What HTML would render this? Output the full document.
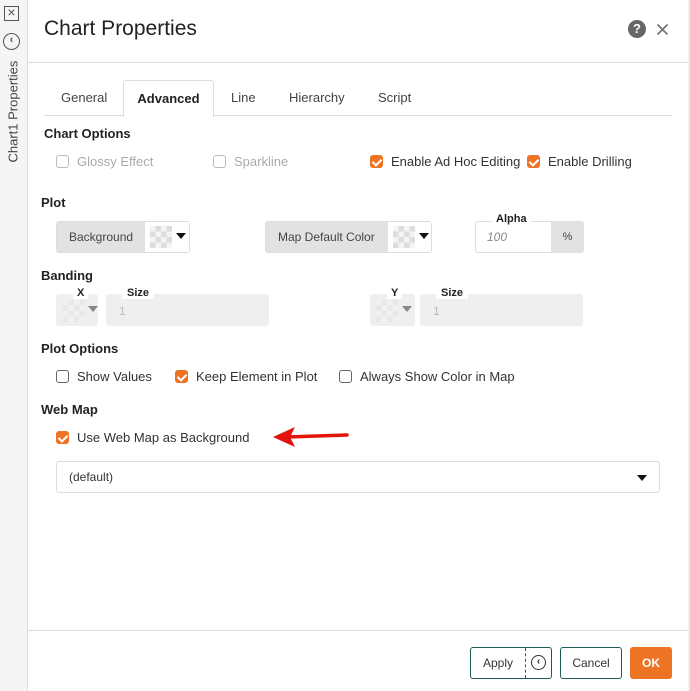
<!DOCTYPE html>
<html><head><meta charset="utf-8"><style>
*{box-sizing:border-box;margin:0;padding:0}
body{width:690px;height:691px;background:#fff;font-family:"Liberation Sans",sans-serif;position:relative;overflow:hidden;color:#222}
.a{position:absolute}
.side{left:0;top:0;width:28px;height:691px;background:#f5f5f5;border-right:1px solid #ddd}
.h{font-weight:bold;font-size:13px;color:#222}
.t{font-size:13px;color:#333}
.g{color:#aaa}
.cb{width:13px;height:13px;border:1px solid #666;border-radius:3px;background:#fff}
.cb.d{border-color:#bbb}
.cb.on{background:#ec7424;border-color:#ec7424}
.cb.on::after{content:"";position:absolute;left:3px;top:1px;width:4px;height:7px;border:solid #fff;border-width:0 2px 2px 0;transform:rotate(45deg)}
.tab{top:80px;height:36px;font-size:13px;color:#444;line-height:36px}
.sw{width:22px;height:22px;background:
 conic-gradient(#ddd 25%,#f4f4f4 0 50%,#ddd 0 75%,#f4f4f4 0) 0 0/11px 11px}
.tri{width:0;height:0;border-left:5px solid transparent;border-right:5px solid transparent;border-top:6px solid #111}
.btn{height:32px;border:1px solid #1e5c57;border-radius:3px;font-size:12px;color:#333;text-align:center;line-height:30px}
</style></head><body>
<div class="a side">
 <div class="a" style="left:4px;top:6px;width:15px;height:15px;border:1.5px solid #555;font-size:14px;line-height:11px;text-align:center;color:#555">×</div>
 <div class="a" style="left:3px;top:33px;width:17px;height:17px;border:1.5px solid #555;border-radius:50%;font-size:11px;line-height:13px;text-align:center;color:#555;font-weight:bold">‹</div>
 <div class="a" style="left:-37px;top:105px;width:100px;transform:rotate(-90deg);font-size:13px;color:#444;text-align:center;white-space:nowrap">Chart1 Properties</div>
</div>
<div class="a" style="left:688px;top:0;width:2px;height:691px;background:#eee"></div>
<div class="a" style="left:44px;top:17px;font-size:21px;color:#222">Chart Properties</div>
<div class="a" style="left:628px;top:20px;width:18px;height:18px;border-radius:50%;background:#666;color:#fff;font-size:13px;font-weight:bold;text-align:center;line-height:18px">?</div>
<svg class="a" style="left:656px;top:23px" width="13" height="13"><path d="M1.5 1.5L11.5 11.5M11.5 1.5L1.5 11.5" stroke="#777" stroke-width="1.8"/></svg>
<div class="a" style="left:28px;top:62px;width:660px;height:1px;background:#ddd"></div>
<div class="a" style="left:44px;top:115px;width:628px;height:1px;background:#ddd"></div>
<div class="a tab" style="left:61px">General</div>
<div class="a tab" style="left:123px;width:91px;height:37px;border:1px solid #ddd;border-bottom:none;border-radius:3px 3px 0 0;background:#fff;text-align:center;font-weight:bold;color:#222">Advanced</div>
<div class="a tab" style="left:231px">Line</div>
<div class="a tab" style="left:289px">Hierarchy</div>
<div class="a tab" style="left:378px">Script</div>

<div class="a h" style="left:44px;top:126px">Chart Options</div>
<div class="a cb d" style="left:56px;top:155px"></div><div class="a t g" style="left:77px;top:154px">Glossy Effect</div>
<div class="a cb d" style="left:213px;top:155px"></div><div class="a t g" style="left:234px;top:154px">Sparkline</div>
<div class="a cb on" style="left:370px;top:155px"></div><div class="a t" style="left:391px;top:154px">Enable Ad Hoc Editing</div>
<div class="a cb on" style="left:527px;top:155px"></div><div class="a t" style="left:548px;top:154px">Enable Drilling</div>

<div class="a h" style="left:41px;top:195px">Plot</div>
<div class="a" style="left:56px;top:221px;width:134px;height:32px;background:#e2e2e2;border-radius:3px;border:1px solid #ddd"></div>
<div class="a t" style="left:69px;top:230px;font-size:12px;color:#444">Background</div>
<div class="a" style="left:145px;top:222px;width:44px;height:30px;background:#fff"></div>
<div class="a sw" style="left:150px;top:226px"></div><div class="a tri" style="left:176px;top:233px"></div>
<div class="a" style="left:265px;top:221px;width:167px;height:32px;background:#e2e2e2;border-radius:3px;border:1px solid #ddd"></div>
<div class="a t" style="left:278px;top:230px;font-size:12px;color:#444">Map Default Color</div>
<div class="a" style="left:388px;top:222px;width:43px;height:30px;background:#fff"></div>
<div class="a sw" style="left:393px;top:226px"></div><div class="a tri" style="left:419px;top:233px"></div>
<div class="a" style="left:475px;top:221px;width:109px;height:32px;border:1px solid #ddd;border-radius:3px;background:#fff"></div>
<div class="a" style="left:551px;top:221px;width:33px;height:32px;background:#e2e2e2;border-radius:0 3px 3px 0;font-size:11px;color:#444;text-align:center;line-height:32px">%</div>
<div class="a" style="left:492px;top:213px;padding:0 4px;background:#fff;font-size:11px;font-weight:bold">Alpha</div>
<div class="a" style="left:487px;top:230px;font-size:12px;color:#888;font-style:italic">100</div>

<div class="a h" style="left:41px;top:268px">Banding</div>
<div class="a" style="left:56px;top:294px;width:42px;height:32px;background:#efefef;border-radius:3px"></div>
<div class="a sw" style="left:63px;top:300px;opacity:.4"></div><div class="a tri" style="left:88px;top:306px;border-top-color:#888"></div>
<div class="a" style="left:106px;top:294px;width:163px;height:32px;background:#efefef;border-radius:3px"></div>
<div class="a" style="left:73px;top:287px;padding:0 4px;background:#fff;font-size:11px;font-weight:bold">X</div>
<div class="a" style="left:122px;top:287px;padding:0 5px;background:#fff;font-size:11px;font-weight:bold">Size</div>
<div class="a g" style="left:119px;top:304px;font-size:12px;color:#bbb">1</div>
<div class="a" style="left:370px;top:294px;width:45px;height:32px;background:#efefef;border-radius:3px"></div>
<div class="a sw" style="left:376px;top:300px;opacity:.4"></div><div class="a tri" style="left:402px;top:306px;border-top-color:#888"></div>
<div class="a" style="left:420px;top:294px;width:163px;height:32px;background:#efefef;border-radius:3px"></div>
<div class="a" style="left:387px;top:287px;padding:0 4px;background:#fff;font-size:11px;font-weight:bold">Y</div>
<div class="a" style="left:436px;top:287px;padding:0 5px;background:#fff;font-size:11px;font-weight:bold">Size</div>
<div class="a" style="left:433px;top:304px;font-size:12px;color:#bbb">1</div>

<div class="a h" style="left:41px;top:341px">Plot Options</div>
<div class="a cb" style="left:56px;top:370px"></div><div class="a t" style="left:77px;top:369px">Show Values</div>
<div class="a cb on" style="left:175px;top:370px"></div><div class="a t" style="left:196px;top:369px">Keep Element in Plot</div>
<div class="a cb" style="left:339px;top:370px"></div><div class="a t" style="left:360px;top:369px">Always Show Color in Map</div>

<div class="a h" style="left:41px;top:402px">Web Map</div>
<div class="a cb on" style="left:56px;top:431px"></div><div class="a t" style="left:77px;top:430px">Use Web Map as Background</div>
<svg class="a" style="left:265px;top:420px" width="90" height="32"><line x1="82" y1="15" x2="22" y2="17" stroke="#e3120b" stroke-width="3.5" stroke-linecap="round"/><polygon points="8,17 30,7 25,17 30,27" fill="#e3120b"/></svg>
<div class="a" style="left:56px;top:461px;width:604px;height:32px;border:1px solid #ddd;border-radius:3px"></div>
<div class="a t" style="left:69px;top:470px;font-size:12px">(default)</div>
<div class="a tri" style="left:637px;top:475px"></div>

<div class="a" style="left:28px;top:630px;width:660px;height:1px;background:#ddd"></div>
<div class="a btn" style="left:470px;top:647px;width:82px;text-align:left;padding-left:12px">Apply</div>
<div class="a" style="left:525px;top:648px;height:30px;border-left:1px dashed #1e5c57"></div>
<div class="a" style="left:531px;top:655px;width:15px;height:15px;border:1.5px solid #333;border-radius:50%;font-size:10px;line-height:11px;text-align:center;font-weight:bold">‹</div>
<div class="a btn" style="left:560px;top:647px;width:62px">Cancel</div>
<div class="a btn" style="left:630px;top:647px;width:42px;background:#ec7424;border-color:#ec7424;color:#fff;font-weight:bold">OK</div>
</body></html>
